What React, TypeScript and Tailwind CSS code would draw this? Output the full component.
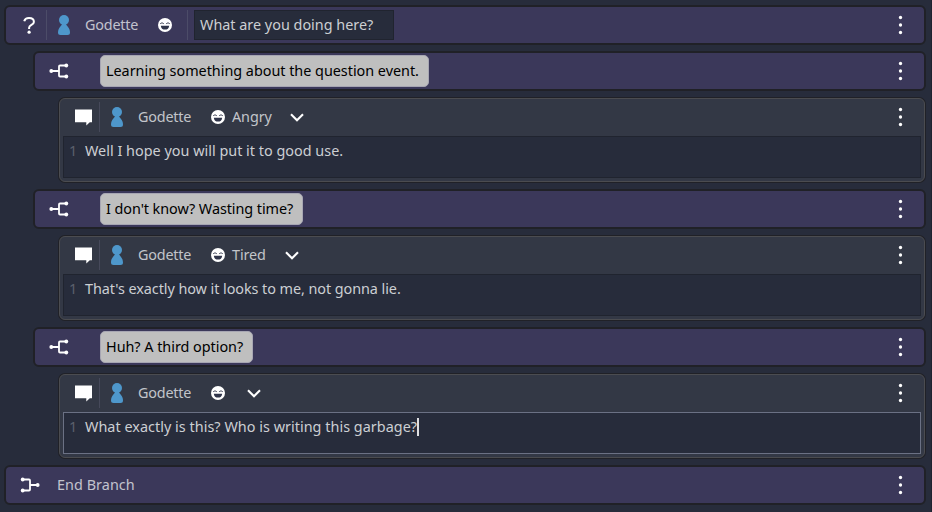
import React from "react";

const Dots = () => (
  <svg className="ml-auto mr-[21px] shrink-0" width="5" height="20" viewBox="0 0 5 20" fill="#fff">
    <circle cx="2.5" cy="2.5" r="1.65" />
    <circle cx="2.5" cy="10" r="1.65" />
    <circle cx="2.5" cy="17.5" r="1.65" />
  </svg>
);

const Person = () => (
  <svg className="shrink-0" width="12" height="20" viewBox="0 0 12 20" fill="#4e97cb">
    <circle cx="6" cy="5" r="5" />
    <path d="M4 8.5h4C8 11 12 12 12 17.5Q12 20 9.5 20h-7Q0 20 0 17.5C0 12 4 11 4 8.5Z" />
  </svg>
);

const Smile = () => (
  <svg className="shrink-0" width="14" height="14" viewBox="0 0 14 14">
    <circle cx="7" cy="7" r="7" fill="#fff" />
    <path d="M2.2 5.7Q4 3.9 5.8 5.7M8.2 5.7Q10 3.9 11.8 5.7" fill="none" stroke="#30354a" strokeWidth="0.9" />
    <path d="M2.8 7.7h8.4Q10.7 11.6 7 11.6T2.8 7.7Z" fill="#30354a" />
  </svg>
);

const Branch = ({ flip = false }: { flip?: boolean }) => (
  <svg className={flip ? "shrink-0 -scale-x-100" : "shrink-0"} width="20" height="16" viewBox="0 0 20 16">
    <path d="M2.5 8H10M17.5 2.5H11Q10 2.5 10 3.5V12.5Q10 13.5 11 13.5H17.5" fill="none" stroke="#fff" strokeWidth="1.8" />
    <g fill="#fff">
      <circle cx="2.3" cy="8" r="1.9" />
      <circle cx="17.3" cy="2.5" r="1.9" />
      <circle cx="17.3" cy="13.5" r="1.9" />
    </g>
  </svg>
);

const Question = () => (
  <svg className="shrink-0" width="12" height="17" viewBox="0 0 12 17">
    <path d="M1.2 4.2C1.8 2.1 3.6 1.1 6 1.1C9.1 1.1 10.9 2.5 10.9 4.9C10.9 8.1 6.1 7.7 6.1 10.7V12" fill="none" stroke="#fff" strokeWidth="2" />
    <circle cx="6.1" cy="15.2" r="1.6" fill="#fff" />
  </svg>
);

const Chevron = () => (
  <svg className="ml-[7px] shrink-0" width="14" height="9" viewBox="0 0 14 9">
    <path d="M1 1.3L7 7.3L13 1.3" fill="none" stroke="#fff" strokeWidth="2.1" />
  </svg>
);

const Bubble = () => (
  <svg className="shrink-0" width="17" height="17" viewBox="0 0 17 17" fill="#fff">
    <path d="M0 .5H17V13.3H14.8L11.3 16.5V13.3H0Z" />
  </svg>
);

const Separator = () => <div className="h-[30px] w-px shrink-0 bg-[#4c4c68]" />;

const row = "flex h-10 shrink-0 items-center rounded-[6px] border-2 border-[#202127] bg-[#3b385a]";

function Choice({ text, size }: { text: string; size: string }) {
  return (
    <div className={`${row} ml-[29px] pl-[14px]`}>
      <Branch />
      <div className={`ml-[31px] flex h-8 items-center rounded-[5px] border border-[#a7a6b3] bg-[#bfbfbf] pl-[5px] text-black ${size}`}>
        {text}
      </div>
      <Dots />
    </div>
  );
}

function Message({ mood, moodWidth, text, tracking, active = false }: { mood: string; moodWidth: string; text: string; tracking: string; active?: boolean }) {
  return (
    <div className="ml-[54px] h-[86px] shrink-0 rounded-[7px] border-2 border-[#202127]">
      <div className="-m-px h-[84px] rounded-[6px] border border-[#4b4c50] bg-[#333845]">
        <div className="mb-px flex h-[36px] items-center pl-[15px]">
          <Bubble />
          <div className="ml-[7px] h-[30px] w-px bg-[#46495a]" />
          <div className="ml-[11px] flex"><Person /></div>
          <span className="-mt-px ml-[15px] w-[73px] tracking-[-0.2px] text-[#c2c5ca]">Godette</span>
          <Smile />
          <span className={`-mt-px ml-[7px] tracking-[-0.1px] text-[#c2c5ca] ${moodWidth}`}>{mood}</span>
          <Chevron />
          <Dots />
        </div>
        <div className={`ml-[3px] mr-[3px] flex h-[42px] border pl-[5px] pt-[2px] ${active ? "border-[#6b7184]" : "border-[#20242f]"} bg-[#272c3b]`}>
          <span className="w-4 text-[#5b606c]">1</span>
          <span className={`text-[#cccfd3] ${tracking}`}>{text}</span>
          {active && <div className="mt-[3px] h-[18px] w-[2px] bg-[#dfe0e2]" />}
        </div>
      </div>
    </div>
  );
}

export default function App() {
  return (
    <div className="h-[512px] w-[932px] overflow-hidden border-r border-[#1f2330] bg-[#272c3b] font-['Noto_Sans',sans-serif] text-[14.4px] leading-6 whitespace-nowrap">
      <div className="flex flex-col gap-[6px] pl-1 pr-[5px] pt-[5px]">
        <div className={`${row} pl-[17px]`}>
          <Question />
          <div className="ml-[11px] flex"><Separator /></div>
          <div className="ml-[11px] flex"><Person /></div>
          <span className="ml-[15px] w-[73px] tracking-[-0.2px] text-[#c2c3ce]">Godette</span>
          <Smile />
          <div className="ml-[15px] flex"><Separator /></div>
          <div className="ml-[6px] flex h-[30px] w-[200px] items-center border border-[#20242f] bg-[#272c3b] pl-[5px] text-[#cccfd3]">
            What are you doing here?
          </div>
          <Dots />
        </div>
        <Choice text="Learning something about the question event." size="w-[329px] tracking-[-0.02px]" />
        <Message mood="Angry" moodWidth="w-[51px]" text="Well I hope you will put it to good use." tracking="tracking-[0.01px]" />
        <Choice text="I don't know? Wasting time?" size="w-[203px] tracking-[-0.06px]" />
        <Message mood="Tired" moodWidth="w-[46px]" text="That's exactly how it looks to me, not gonna lie." tracking="tracking-[-0.06px]" />
        <Choice text="Huh? A third option?" size="w-[153px] tracking-[-0.03px]" />
        <Message mood="" moodWidth="w-[8px]" text="What exactly is this? Who is writing this garbage?" tracking="tracking-[0.03px]" active />
        <div className={`${row} pl-[14px]`}>
          <Branch flip />
          <span className="ml-[17px] tracking-[0.05px] text-[#c2c3ce]">End Branch</span>
          <Dots />
        </div>
      </div>
    </div>
  );
}
